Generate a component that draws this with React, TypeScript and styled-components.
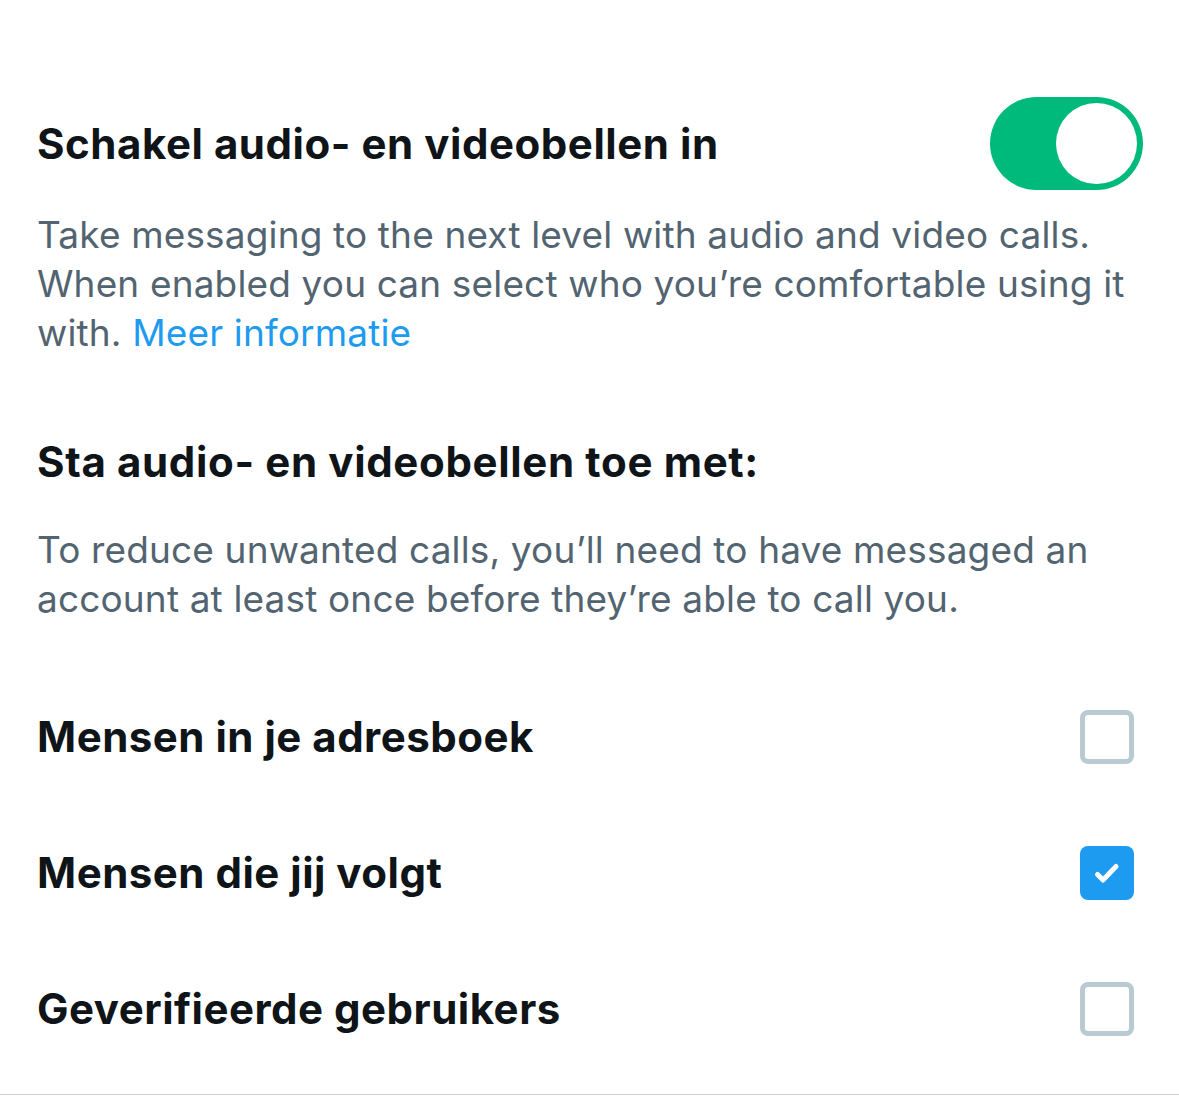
import React, { useState } from 'react';
import styled, { createGlobalStyle } from 'styled-components';

const GlobalStyle = createGlobalStyle`
  html, body {
    margin: 0;
    padding: 0;
    background: #ffffff;
  }
  body {
    font-family: Inter, "Noto Sans", "Liberation Sans", sans-serif;
    color: #0f1419;
  }
`;

const Page = styled.div`
  width: 1179px;
  min-height: 1115px;
  background: #ffffff;
`;

const Content = styled.div`
  padding: 97px 36px 0 37px;
`;

const HeaderRow = styled.div`
  display: flex;
  align-items: center;
  justify-content: space-between;
  height: 93px;
`;

const Title = styled.h2`
  margin: 0;
  font-size: 42px;
  line-height: 50px;
  font-weight: 700;
  letter-spacing: 0.55px;
  color: #0f1419;
`;

const SectionTitle = styled(Title)`
  margin-top: 80px;
  letter-spacing: 0.65px;
`;

const Description = styled.p<{ gap: number }>`
  margin: ${p => p.gap}px 0 0 0;
  font-size: 37px;
  line-height: 49px;
  font-weight: 400;
  color: #536471;
  letter-spacing: 0.15px;
`;

const Link = styled.a`
  color: #1d9bf0;
  text-decoration: none;
`;

const SwitchTrack = styled.button<{ on: boolean }>`
  position: relative;
  width: 153px;
  height: 93px;
  border-radius: 47px;
  border: none;
  padding: 0;
  cursor: pointer;
  background: ${p => (p.on ? '#00ba7c' : '#cfd9de')};
  flex-shrink: 0;
`;

const SwitchKnob = styled.span<{ on: boolean }>`
  position: absolute;
  top: 6px;
  left: ${p => (p.on ? '66px' : '6px')};
  width: 81px;
  height: 81px;
  border-radius: 50%;
  background: #ffffff;
`;

const OptionList = styled.div`
  margin-top: 46px;
  padding-right: 9px;
`;

const OptionRow = styled.label`
  display: flex;
  align-items: center;
  justify-content: space-between;
  height: 136px;
  cursor: pointer;
`;

const OptionLabel = styled.span`
  font-size: 42px;
  line-height: 50px;
  font-weight: 700;
  letter-spacing: 0.5px;
  color: #0f1419;
`;

const Box = styled.span<{ checked: boolean }>`
  display: flex;
  align-items: center;
  justify-content: center;
  box-sizing: border-box;
  width: 54px;
  height: 54px;
  border-radius: 8px;
  border: ${p => (p.checked ? 'none' : '5px solid #b9cad3')};
  background: ${p => (p.checked ? '#1d9bf0' : '#ffffff')};
`;

const Divider = styled.div`
  margin-top: 17px;
  height: 1px;
  background: #d0d4d6;
`;

const options = [
  { id: 'adresboek', label: 'Mensen in je adresboek', checked: false },
  { id: 'volgt', label: 'Mensen die jij volgt', checked: true },
  { id: 'geverifieerd', label: 'Geverifieerde gebruikers', checked: false },
];

export default function App() {
  const [enabled, setEnabled] = useState(true);
  const [checked, setChecked] = useState<Record<string, boolean>>(
    Object.fromEntries(options.map(o => [o.id, o.checked]))
  );

  return (
    <Page>
      <GlobalStyle />
      <Content>
        <HeaderRow>
          <Title>Schakel audio- en videobellen in</Title>
          <SwitchTrack on={enabled} onClick={() => setEnabled(!enabled)}>
            <SwitchKnob on={enabled} />
          </SwitchTrack>
        </HeaderRow>
        <Description gap={20}>
          Take messaging to the next level with audio and video calls. When enabled you can select
          who you’re comfortable using it with. <Link href="#">Meer informatie</Link>
        </Description>

        <SectionTitle>Sta audio- en videobellen toe met:</SectionTitle>
        <Description gap={38}>
          To reduce unwanted calls, you’ll need to have messaged an account at least once before
          they’re able to call you.
        </Description>

        <OptionList>
          {options.map(o => (
            <OptionRow key={o.id} onClick={() => setChecked({ ...checked, [o.id]: !checked[o.id] })}>
              <OptionLabel>{o.label}</OptionLabel>
              <Box checked={checked[o.id]}>
                {checked[o.id] && (
                  <svg width="36" height="36" viewBox="0 0 36 36">
                    <path
                      d="M8.5 19.5l5.5 5.5L27 11.5"
                      fill="none"
                      stroke="#ffffff"
                      strokeWidth="5"
                      strokeLinecap="round"
                      strokeLinejoin="round"
                    />
                  </svg>
                )}
              </Box>
            </OptionRow>
          ))}
        </OptionList>
      </Content>
      <Divider />
    </Page>
  );
}
